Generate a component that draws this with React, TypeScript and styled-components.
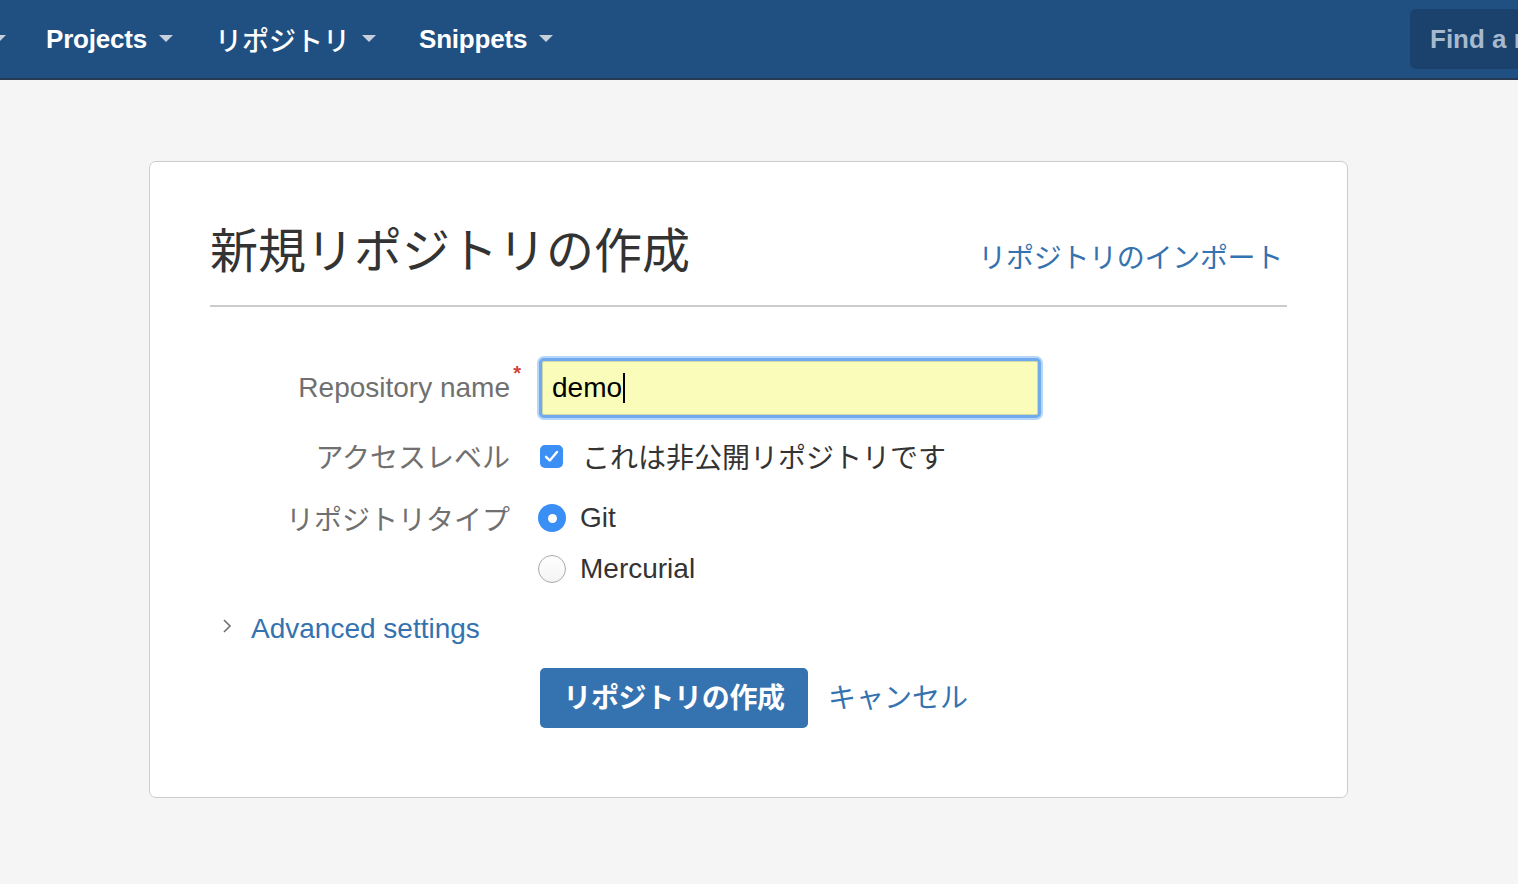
import React from "react";
import styled, { createGlobalStyle } from "styled-components";

const GlobalStyle = createGlobalStyle`
  html, body { margin: 0; padding: 0; }
  body {
    background: #f5f5f5;
    font-family: "Liberation Sans", Arial, "Noto Sans CJK JP", sans-serif;
    overflow-x: hidden;
  }
  * { box-sizing: border-box; }
`;

const Header = styled.header`
  height: 80px;
  background: #205081;
  border-bottom: 2px solid #273a52;
  display: flex;
  align-items: center;
  overflow: hidden;
`;

const NavItem = styled.div<{ $gap?: number }>`
  display: flex;
  align-items: center;
  gap: 12px;
  margin-right: ${(p) => p.$gap ?? 42}px;
  color: #fff;
  font-family: "Liberation Sans", Arial, "Noto Sans CJK JP", sans-serif;
  font-weight: 700;
  font-size: 26px;
  letter-spacing: -0.2px;
  white-space: nowrap;
`;

const NavJp = styled.span`
  font-family: "Noto Sans CJK JP", sans-serif;
  font-weight: 500;
  font-size: 27px;
  letter-spacing: 0;
`;

const LeadCaret = styled.div`
  margin-left: -8px;
  margin-right: 40px;
  display: flex;
  align-items: center;
`;

const Search = styled.div`
  margin-left: auto;
  margin-right: -200px;
  flex-shrink: 0;
  width: 308px;
  height: 60px;
  border-radius: 6px;
  background: #1b416d;
  display: flex;
  align-items: center;
  padding-left: 20px;
  color: #a7b9cd;
  font-weight: 700;
  font-size: 26px;
  white-space: nowrap;
`;

const Main = styled.main`
  padding: 81px 0 0 149px;
`;

const Card = styled.section`
  width: 1199px;
  background: #fff;
  border: 1px solid #cccccc;
  border-radius: 7px;
  padding: 56px 60px 69px;
`;

const CardHead = styled.div`
  display: flex;
  align-items: baseline;
  justify-content: space-between;
  padding-bottom: 29px;
  border-bottom: 2px solid #cccccc;
`;

const Title = styled.h1`
  margin: 0;
  font-family: "Noto Sans CJK JP", sans-serif;
  font-weight: 400;
  font-size: 48px;
  line-height: 58px;
  color: #333;
`;

const Link = styled.a<{ $size?: number }>`
  color: #3572b0;
  text-decoration: none;
  font-size: ${(p) => p.$size ?? 28}px;
  cursor: pointer;
`;

const ImportLink = styled(Link)`
  font-family: "Noto Sans CJK JP", sans-serif;
  margin-right: 4px;
  letter-spacing: -0.3px;
`;

const Form = styled.div`
  margin-top: 51px;
  display: flex;
  flex-direction: column;
  gap: 20px;
`;

const Row = styled.div<{ $h?: number; $shift?: number }>`
  display: grid;
  grid-template-columns: 300px 1fr;
  column-gap: 30px;
  align-items: start;
  min-height: ${(p) => p.$h ?? 40}px;
  margin-top: ${(p) => p.$shift ?? 0}px;
`;

const Label = styled.div<{ $h?: number }>`
  position: relative;
  height: ${(p) => p.$h ?? 40}px;
  display: flex;
  align-items: center;
  justify-content: flex-end;
  color: #707070;
  font-size: 28px;
  white-space: nowrap;
`;

const Required = styled.span`
  position: absolute;
  right: -11px;
  top: 4px;
  color: #d04437;
  font-size: 20px;
  font-weight: 700;
`;

const InputBox = styled.div`
  width: 502px;
  height: 60px;
  margin-left: -1px;
  border: 3px solid #72aaee;
  border-radius: 5px;
  box-shadow: 0 0 0 2px #b6d6fa, inset 0 0 0 1px #cdd9a8;
  background: #f9fdb9;
  display: flex;
  align-items: center;
  padding-left: 10px;
  color: #000;
  font-size: 28px;
`;

const Caret = styled.span`
  display: inline-block;
  width: 2px;
  height: 30px;
  background: #000;
  margin-left: 1px;
`;

const Choice = styled.label<{ $gap?: number }>`
  height: 40px;
  display: flex;
  align-items: center;
  gap: ${(p) => p.$gap ?? 14}px;
  color: #333;
  font-size: 28px;
  white-space: nowrap;
`;

const JpText = styled.span`
  font-family: "Noto Sans CJK JP", sans-serif;
`;

const CheckBox = styled.span`
  width: 23px;
  height: 23px;
  border-radius: 5px;
  background: #3b8ff5;
  display: inline-flex;
  align-items: center;
  justify-content: center;
`;

const Radio = styled.span<{ $on?: boolean }>`
  width: 28px;
  height: 28px;
  margin-left: -2px;
  border-radius: 50%;
  display: inline-flex;
  align-items: center;
  justify-content: center;
  background: ${(p) => (p.$on ? "#3a8ff5" : "linear-gradient(#fff, #f4f4f4)")};
  border: ${(p) => (p.$on ? "none" : "1.5px solid #a9a9a9")};
  &::after {
    content: "";
    display: ${(p) => (p.$on ? "block" : "none")};
    width: 9px;
    height: 9px;
    border-radius: 50%;
    background: #fff;
  }
`;

const RadioStack = styled.div`
  display: flex;
  flex-direction: column;
  gap: 11px;
`;

const Advanced = styled.div`
  height: 40px;
  display: flex;
  align-items: center;
  gap: 19px;
  padding-left: 12px;
`;

const Actions = styled.div`
  display: flex;
  align-items: center;
  gap: 20px;
  padding-left: 330px;
  margin-top: -1px;
`;

const PrimaryButton = styled.button`
  height: 60px;
  width: 268px;
  border: none;
  border-radius: 5px;
  background: #3572b0;
  color: #fff;
  font-family: "Noto Sans CJK JP", sans-serif;
  font-weight: 700;
  font-size: 28px;
  line-height: 1;
  padding: 0 0 4px;
  letter-spacing: -0.3px;
  cursor: pointer;
`;

const CancelLink = styled(Link)`
  font-family: "Noto Sans CJK JP", sans-serif;
  margin-top: -4px;
`;

const NavCaret = () => (
  <svg width="14" height="8" viewBox="0 0 14 8">
    <path d="M0 0 L14 0 L7 7 Z" fill="#c6d0dc" />
  </svg>
);

export default function App() {
  return (
    <>
      <GlobalStyle />
      <Header>
        <LeadCaret>
          <NavCaret />
        </LeadCaret>
        <NavItem>
          Projects <NavCaret />
        </NavItem>
        <NavItem $gap={43}>
          <NavJp>リポジトリ</NavJp> <NavCaret />
        </NavItem>
        <NavItem>
          Snippets <NavCaret />
        </NavItem>
        <Search>Find a repo</Search>
      </Header>
      <Main>
        <Card>
          <CardHead>
            <Title>新規リポジトリの作成</Title>
            <ImportLink>リポジトリのインポート</ImportLink>
          </CardHead>
          <Form>
            <Row $h={60}>
              <Label $h={60}>
                Repository name<Required>*</Required>
              </Label>
              <InputBox>
                demo
                <Caret />
              </InputBox>
            </Row>
            <Row $shift={-2}>
              <Label>
                <JpText>アクセスレベル</JpText>
              </Label>
              <Choice $gap={19}>
                <CheckBox>
                  <svg width="15" height="13" viewBox="0 0 15 13">
                    <path
                      d="M2 6.8 L5.8 10.5 L13 2"
                      fill="none"
                      stroke="#fff"
                      strokeWidth="2.4"
                      strokeLinecap="round"
                      strokeLinejoin="round"
                    />
                  </svg>
                </CheckBox>
                <JpText>これは非公開リポジトリです</JpText>
              </Choice>
            </Row>
            <Row $shift={2}>
              <Label>
                <JpText>リポジトリタイプ</JpText>
              </Label>
              <RadioStack>
                <Choice>
                  <Radio $on />
                  Git
                </Choice>
                <Choice>
                  <Radio />
                  Mercurial
                </Choice>
              </RadioStack>
            </Row>
            <Advanced>
              <svg width="10" height="16" viewBox="0 0 10 16" style={{ marginTop: -6 }}>
                <path d="M2 2 L8 8 L2 14" fill="none" stroke="#707070" strokeWidth="1.6" />
              </svg>
              <Link>Advanced settings</Link>
            </Advanced>
            <Actions>
              <PrimaryButton>リポジトリの作成</PrimaryButton>
              <CancelLink>キャンセル</CancelLink>
            </Actions>
          </Form>
        </Card>
      </Main>
    </>
  );
}
